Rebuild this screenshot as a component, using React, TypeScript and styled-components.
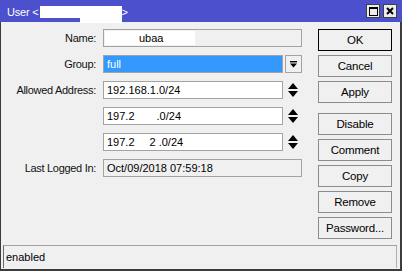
import React from 'react';
import styled, { createGlobalStyle } from 'styled-components';

const GlobalStyle = createGlobalStyle`
	html, body {
		margin: 0;
		padding: 0;
		background: #f0f0f0;
	}
	body {
		font-family: 'Liberation Sans', Arial, sans-serif;
		font-size: 11px;
		color: #000;
	}
`;

const UpDownIcon = () => (
	<svg width="10" height="14" viewBox="0 0 10 14">
		<polygon points="5,0 10,6 0,6" fill="#000" />
		<polygon points="0,8 10,8 5,14" fill="#000" />
	</svg>
);

const DropIcon = () => (
	<svg width="7" height="7" viewBox="0 0 7 7">
		<rect x="0" y="0" width="7" height="1.4" fill="#000" />
		<polygon points="0,2.5 7,2.5 3.5,6.5" fill="#000" />
	</svg>
);

const MaxIcon = () => (
	<svg width="9" height="9" viewBox="0 0 9 9">
		<rect x="0.5" y="0.5" width="8" height="8" fill="none" stroke="#000" />
		<rect x="0" y="0" width="9" height="2" fill="#000" />
	</svg>
);

const CloseIcon = () => (
	<svg width="8" height="8" viewBox="0 0 8 8">
		<path d="M1 1 L7 7 M7 1 L1 7" stroke="#000" strokeWidth="2" />
	</svg>
);

const buttons = ['OK', 'Cancel', 'Apply', 'Disable', 'Comment', 'Copy', 'Remove', 'Password...'];

const App = () => {
	return (
		<>
			<GlobalStyle />
			<Window>
				<TitleBar>
					<Title>
						User &lt;<TitleMask />&gt;
					</Title>
					<WinBtns>
						<WinBtn>
							<MaxIcon />
						</WinBtn>
						<WinBtn>
							<CloseIcon />
						</WinBtn>
					</WinBtns>
				</TitleBar>
				<Body>
					<Main>
						<Form>
							<Label>Name:</Label>
							<Field $wide $disabled>
								<NameMask>ubaa</NameMask>
							</Field>

							<Label>Group:</Label>
							<Field $selected>full</Field>
							<SideBtn>
								<DropIcon />
							</SideBtn>

							<Label>Allowed Address:</Label>
							<Field>192.168.1.0/24</Field>
							<Side>
								<UpDownIcon />
							</Side>

							<span />
							<Field>
								197.2<Hidden $w={22} />.0/24
							</Field>
							<Side>
								<UpDownIcon />
							</Side>

							<span />
							<Field>
								197.2<Hidden $w={15} />2<Hidden $w={3} />.0/24
							</Field>
							<Side>
								<UpDownIcon />
							</Side>

							<Label>Last Logged In:</Label>
							<Field $wide $disabled>
								Oct/09/2018 07:59:18
							</Field>
						</Form>
						<Buttons>
							{buttons.map((b, i) => (
								<Button key={b} $default={i === 0} $spaced={b === 'Disable'}>
									{b}
								</Button>
							))}
						</Buttons>
					</Main>
					<Status>enabled</Status>
				</Body>
			</Window>
		</>
	);
};

export default App;

const Window = styled.div`
	width: 402px;
	height: 271px;
	display: flex;
	flex-direction: column;
	background: #f0f0f0;
`;

const TitleBar = styled.div`
	height: 22px;
	background: #4c50cd;
	display: flex;
	align-items: center;
	justify-content: space-between;
	padding: 0 5px 0 7px;
	box-sizing: border-box;
`;

const Title = styled.div`
	color: #fff;
	font-size: 11px;
	letter-spacing: -0.2px;
	display: flex;
	align-items: center;
	white-space: nowrap;
	margin-top: 2px;
`;

const TitleMask = styled.span`
	display: inline-block;
	width: 82px;
	height: 17px;
	margin: 5px 0 0 1px;
	background:
		linear-gradient(#fff, #fff) 0 0 / 100% 12px no-repeat,
		linear-gradient(#fff, #fff) 40px 0 / 42px 17px no-repeat;
`;

const Hidden = styled.span<{ $w: number }>`
	display: inline-block;
	width: ${(p) => p.$w}px;
	height: 1px;
`;

const WinBtns = styled.div`
	display: flex;
	gap: 3px;
`;

const WinBtn = styled.div`
	width: 14px;
	height: 14px;
	box-sizing: border-box;
	border: 1px solid #404040;
	background: #ececec;
	display: flex;
	align-items: center;
	justify-content: center;
`;

const Body = styled.div`
	flex: 1;
	display: flex;
	flex-direction: column;
	border-left: 1px solid #3c3c3c;
	border-right: 2px solid #3c3c3c;
	border-bottom: 2px solid #3c3c3c;
`;

const Main = styled.div`
	height: 223px;
	display: flex;
	align-items: flex-start;
`;

const Form = styled.div`
	display: grid;
	grid-template-columns: 101px 180px 18px;
	grid-auto-rows: 18px;
	column-gap: 1px;
	row-gap: 8px;
	padding-top: 7px;
`;

const Label = styled.div`
	text-align: right;
	padding-right: 6px;
	line-height: 18px;
	letter-spacing: -0.3px;
	white-space: nowrap;
	color: #111;
`;

const Field = styled.div<{ $wide?: boolean; $disabled?: boolean; $selected?: boolean }>`
	grid-column: ${(p) => (p.$wide ? 'span 2' : 'auto')};
	box-sizing: border-box;
	height: 18px;
	border: 1px solid #a3a3a3;
	background: ${(p) => (p.$selected ? '#3399ff' : p.$disabled ? '#f0f0f0' : '#fff')};
	color: ${(p) => (p.$selected ? '#fff' : '#000')};
	padding-left: 3px;
	display: flex;
	align-items: center;
	white-space: nowrap;
	overflow: hidden;
`;

const NameMask = styled.span`
	background: #fff;
	padding-left: 34px;
	width: 56px;
	height: 14px;
	line-height: 14px;
	margin-left: -2px;
`;

const Side = styled.div`
	display: flex;
	align-items: center;
	justify-content: center;
`;

const SideBtn = styled.div`
	box-sizing: border-box;
	border: 1px solid #a3a3a3;
	display: flex;
	align-items: center;
	justify-content: center;
	margin-left: 1px;
`;

const Buttons = styled.div`
	display: flex;
	flex-direction: column;
	gap: 4px;
	margin-left: 16px;
	padding-top: 7px;
`;

const Button = styled.div<{ $default?: boolean; $spaced?: boolean }>`
	width: 74px;
	height: 22px;
	box-sizing: border-box;
	border: 1px solid ${(p) => (p.$default ? '#000' : '#8c8c8c')};
	margin-top: ${(p) => (p.$spaced ? '6px' : '0')};
	display: flex;
	align-items: center;
	justify-content: center;
	font-size: 11.5px;
	letter-spacing: -0.2px;
	color: #000;
`;

const Status = styled.div`
	height: 23px;
	box-sizing: border-box;
	margin: 0 3px 1px 2px;
	border-top: 1px solid #a0a0a0;
	border-left: 1px solid #6a6a6a;
	border-right: 1px solid #b0b0b0;
	padding-left: 2px;
	display: flex;
	align-items: center;
	color: #000;
`;
